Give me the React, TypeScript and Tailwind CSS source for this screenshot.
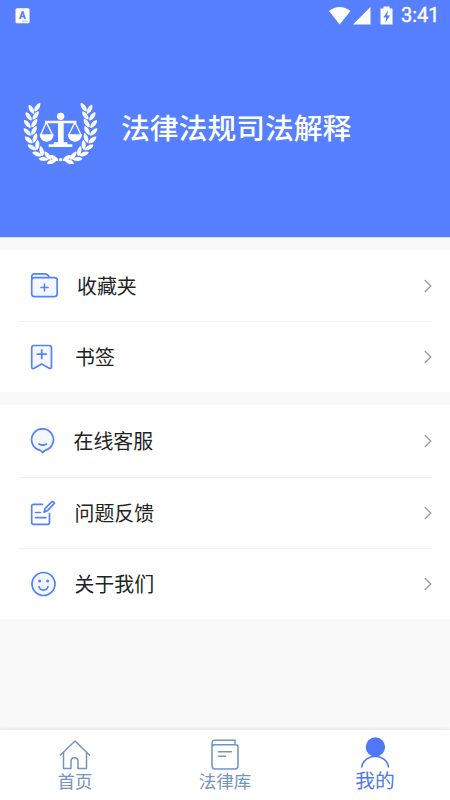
import React from 'react';

interface MenuItem {
  label: string;
  icon: React.ReactNode;
  offset: string;
  height: string;
}

// [x, y, rotation] of every leaf on the left branch, mirrored for the right one
const leaves = [
  [49, 58, 62], [67, 52, -55],
  [41, 79, 54], [62, 76, -54],
  [37, 102, 50], [58, 99, -56],
  [37, 126, 46], [57, 122, -62],
  [41, 150, 40], [60, 144, -72],
  [51, 172, 31], [67, 165, -86],
  [66, 192, 20], [80, 183, -104],
  [86, 207, 4], [98, 197, -128],
  [110, 215, -20], [117, 204, 32],
];

const Branch: React.FC = () => (
  <g>
    {leaves.map(([x, y, r], index) => (
      <path
        key={index}
        d="M-15.500 0C-8 -8.500 8 -8 15.500 0C8 8 -8 8.500 -15.500 0Z"
        transform={`translate(${x} ${y}) rotate(${r})`}
      />
    ))}
  </g>
);

const Logo: React.FC = () => (
  <svg className="h-[85px] w-[95px]" viewBox="0 0 285 255" fill="#fff">
    <Branch />
    <g transform="translate(273 0) scale(-1 1)">
      <Branch />
    </g>
    <circle cx="137" cy="209" r="5" />
    <circle cx="137" cy="79" r="11" />
    <path d="M90 92H184V100H146V157H157V163H172V171H101V163H116V157H129V100H90Z" />
    <path d="M74 133H116C115 147 107 155 95 155C83 155 75 147 74 133ZM158 133H201C200 147 192 155 180 155C168 155 159 147 158 133Z" />
    <path d="M94 97L77 135M94 97L113 135M180 97L161 135M180 97L198 135" fill="none" stroke="#fff" strokeWidth="4" />
  </svg>
);

const iconProps = {
  fill: 'none',
  stroke: '#5581fb',
  strokeWidth: 1.7,
  strokeLinecap: 'round' as const,
  strokeLinejoin: 'round' as const,
};

const FolderIcon = () => (
  <svg width="28" height="26" viewBox="0 0 28 26" {...iconProps}>
    <path d="M1.700 5.500V4Q1.700 0.900 5 0.900H14.500Q18 0.900 19.200 4.300" fill="#f4f7ff" />
    <rect x="1.700" y="4.600" width="25.500" height="19" rx="2.800" fill="#f4f7ff" />
    <path d="M14.500 11V18M11 14.500H18" strokeWidth="1.500" />
  </svg>
);

const BookmarkIcon = () => (
  <svg width="23" height="26" viewBox="0 0 23 26" {...iconProps}>
    <path d="M4 1.500H19Q21.500 1.500 21.500 4V23Q21.300 25 19.200 24.200L11.700 20L4.200 24.300Q1.700 25.200 1.700 23V4Q1.700 1.500 4 1.500Z" fill="#f4f7ff" />
    <path d="M11.700 5.800V14.500M7.300 10.100H16.100" />
  </svg>
);

const ServiceIcon = () => (
  <svg width="25" height="26" viewBox="0 0 25 26" {...iconProps}>
    <path d="M10.500 22.500L12.500 24.500L15 22.300A10.900 10.900 0 1 0 10 22.300Z" fill="#f4f7ff" />
    <path d="M9 16Q12.700 18.300 16.400 16" />
  </svg>
);

const FeedbackIcon = () => (
  <svg width="26" height="26" viewBox="0 0 26 26" {...iconProps}>
    <path d="M12.500 4.300H3.500Q1.700 4.300 1.700 6V22.500Q1.700 24.300 3.500 24.300H17.700Q19.500 24.300 19.500 22.500V13.500M5.500 12.500H10.500M5.500 17.600H16" />
    <path d="M14 12.200L15.200 8.300L21.600 1.900Q23.200 1.200 24.500 3.200L17.800 10.400Z" />
  </svg>
);

const SmileIcon = () => (
  <svg width="26" height="26" viewBox="0 0 26 26" {...iconProps}>
    <circle cx="13.500" cy="13" r="11.500" fill="#f4f7ff" />
    <path d="M9 15.600C10 20.200 17 20.200 18 15.600" />
    <circle cx="9.600" cy="10" r="1.500" fill="#5581fb" stroke="none" />
    <circle cx="17.700" cy="10" r="1.500" fill="#5581fb" stroke="none" />
  </svg>
);

const groups: MenuItem[][] = [
  [
    { label: '收藏夹', icon: <FolderIcon />, offset: 'w-[47px]', height: 'h-[71px]' },
    { label: '书签', icon: <BookmarkIcon />, offset: 'w-[45px]', height: 'h-[71px]' },
  ],
  [
    { label: '在线客服', icon: <ServiceIcon />, offset: 'w-[43.500px]', height: 'h-[72px]' },
    { label: '问题反馈', icon: <FeedbackIcon />, offset: 'w-[44.500px]', height: 'h-[71px]' },
    { label: '关于我们', icon: <SmileIcon />, offset: 'w-[44.500px]', height: 'h-[71px]' },
  ],
];

const MenuRow: React.FC<{ item: MenuItem; first: boolean }> = ({ item, first }) => (
  <div className={`flex items-center pl-[11px] ${item.height} ${first ? '' : 'border-t border-[#eff1f3] pb-[1px]'}`}>
    <div className={`shrink-0 ${item.offset}`}>{item.icon}</div>
    <span className="flex-1 text-[19.9px] leading-[20px] text-[#222]">{item.label}</span>
    <svg width="8" height="14" viewBox="0 0 8 14" fill="none" stroke="#999" strokeWidth="1.300">
      <path d="M0.800 1L6.800 7L0.800 13" />
    </svg>
  </div>
);

const StatusBar: React.FC = () => (
  <div className="flex h-[31px] items-center justify-between pr-[11px] pl-[15px]">
    <svg width="15" height="16" viewBox="0 0 15 16">
      <rect x="0.500" y="0.200" width="14" height="15" rx="1.500" fill="#fff" />
      <text x="7.300" y="11" textAnchor="middle" fill="#5580ff" className="font-[Roboto,sans-serif] text-[10px] font-black">A</text>
      <path d="M7.500 13.200H13" stroke="#5580ff" strokeWidth="0.800" strokeDasharray="1.300 .6" />
    </svg>
    <div className="flex items-center">
      <svg width="72" height="20" viewBox="0 0 72 20" fill="#fff">
        <path d="M0 5Q10.700 -3 21.400 5L10.700 18.500Z" />
        <path d="M24 18.500L41.500 1V18.500Z" />
        <path
          fillRule="evenodd"
          d="M51.500 2.500H54.500V0.500H60.500V2.500H63.500V18.500H51.500ZM59 4.500L54.300 11.500H57.300L56.300 16.500L61.200 9.500H58.100Z"
        />
      </svg>
      <span className="w-[38px] pb-[1px] text-right font-[Roboto,sans-serif] text-[20px] leading-none whitespace-nowrap [-webkit-text-stroke:0.4px_white]">3:41</span>
    </div>
  </div>
);

const TabBar: React.FC = () => (
  <nav className="grid h-[71px] grid-cols-3 border-t border-[#ededed] bg-white text-[#7294bf] shadow-[0_-1px_3px_rgba(0,0,0,0.06)]">
    <div className="flex flex-col items-center pt-[9px]">
      <svg width="32" height="32" viewBox="0 0 32 32" fill="none" stroke="#7294bf" strokeWidth="1.500" strokeLinejoin="round">
        <path d="M1 16.500L16 2L31 16.500M4.500 13.500V29.500H12V22.500Q12 18.800 15.500 18.800Q19 18.800 19 22.500V29.500H27.500V13.500" />
      </svg>
      <span className="text-[17.5px] leading-[20px]">首页</span>
    </div>
    <div className="flex flex-col items-center pt-[9px]">
      <svg width="30" height="32" viewBox="0 0 30 32" fill="none" stroke="#7294bf" strokeWidth="1.500" strokeLinecap="round">
        <path d="M2 8V26.500Q2 30 5.500 30H25Q28 30 28 27V8Q28 5.800 25.500 5.800H5Q2 6 2 8V4.500Q2 1.300 5 1.300H25V5.800M8.500 12.800H21.500M8.500 17.300H15.500" />
      </svg>
      <span className="text-[17.5px] leading-[20px]">法律库</span>
    </div>
    <div className="flex flex-col items-center pt-[6px] text-[#5077f5]">
      <svg width="30" height="32" viewBox="0 0 30 32">
        <circle cx="15.400" cy="11" r="9.700" fill="#5077f5" />
        <path d="M1.700 31.500C3.500 16.500 27 16.500 28.500 31.500" fill="none" stroke="#5077f5" strokeWidth="1.600" />
      </svg>
      <span className="text-[19.8px] leading-[24px]">我的</span>
    </div>
  </nav>
);

const App: React.FC = () => {
  return (
    <div className="flex h-[800px] w-[450px] flex-col overflow-hidden bg-[#f9f9f9] font-['Noto_Sans_CJK_SC',sans-serif]">
      <header className="h-[238px] border-b border-[#d5dfff] bg-[#5680ff] text-white">
        <StatusBar />
        <div className="flex items-center pt-[59px] pl-[15px]">
          <Logo />
          <h1 className="mb-[11px] ml-[11px] text-[28.8px] font-medium leading-none">法律法规司法解释</h1>
        </div>
      </header>
      <main className="flex flex-1 flex-col gap-[13px] pt-[12px]">
        {groups.map((group, index) => (
          <section key={index} className="bg-white pr-[18px] pl-[19px]">
            {group.map((item, i) => (
              <MenuRow key={item.label} item={item} first={i === 0} />
            ))}
          </section>
        ))}
      </main>
      <TabBar />
    </div>
  );
};

export default App;
